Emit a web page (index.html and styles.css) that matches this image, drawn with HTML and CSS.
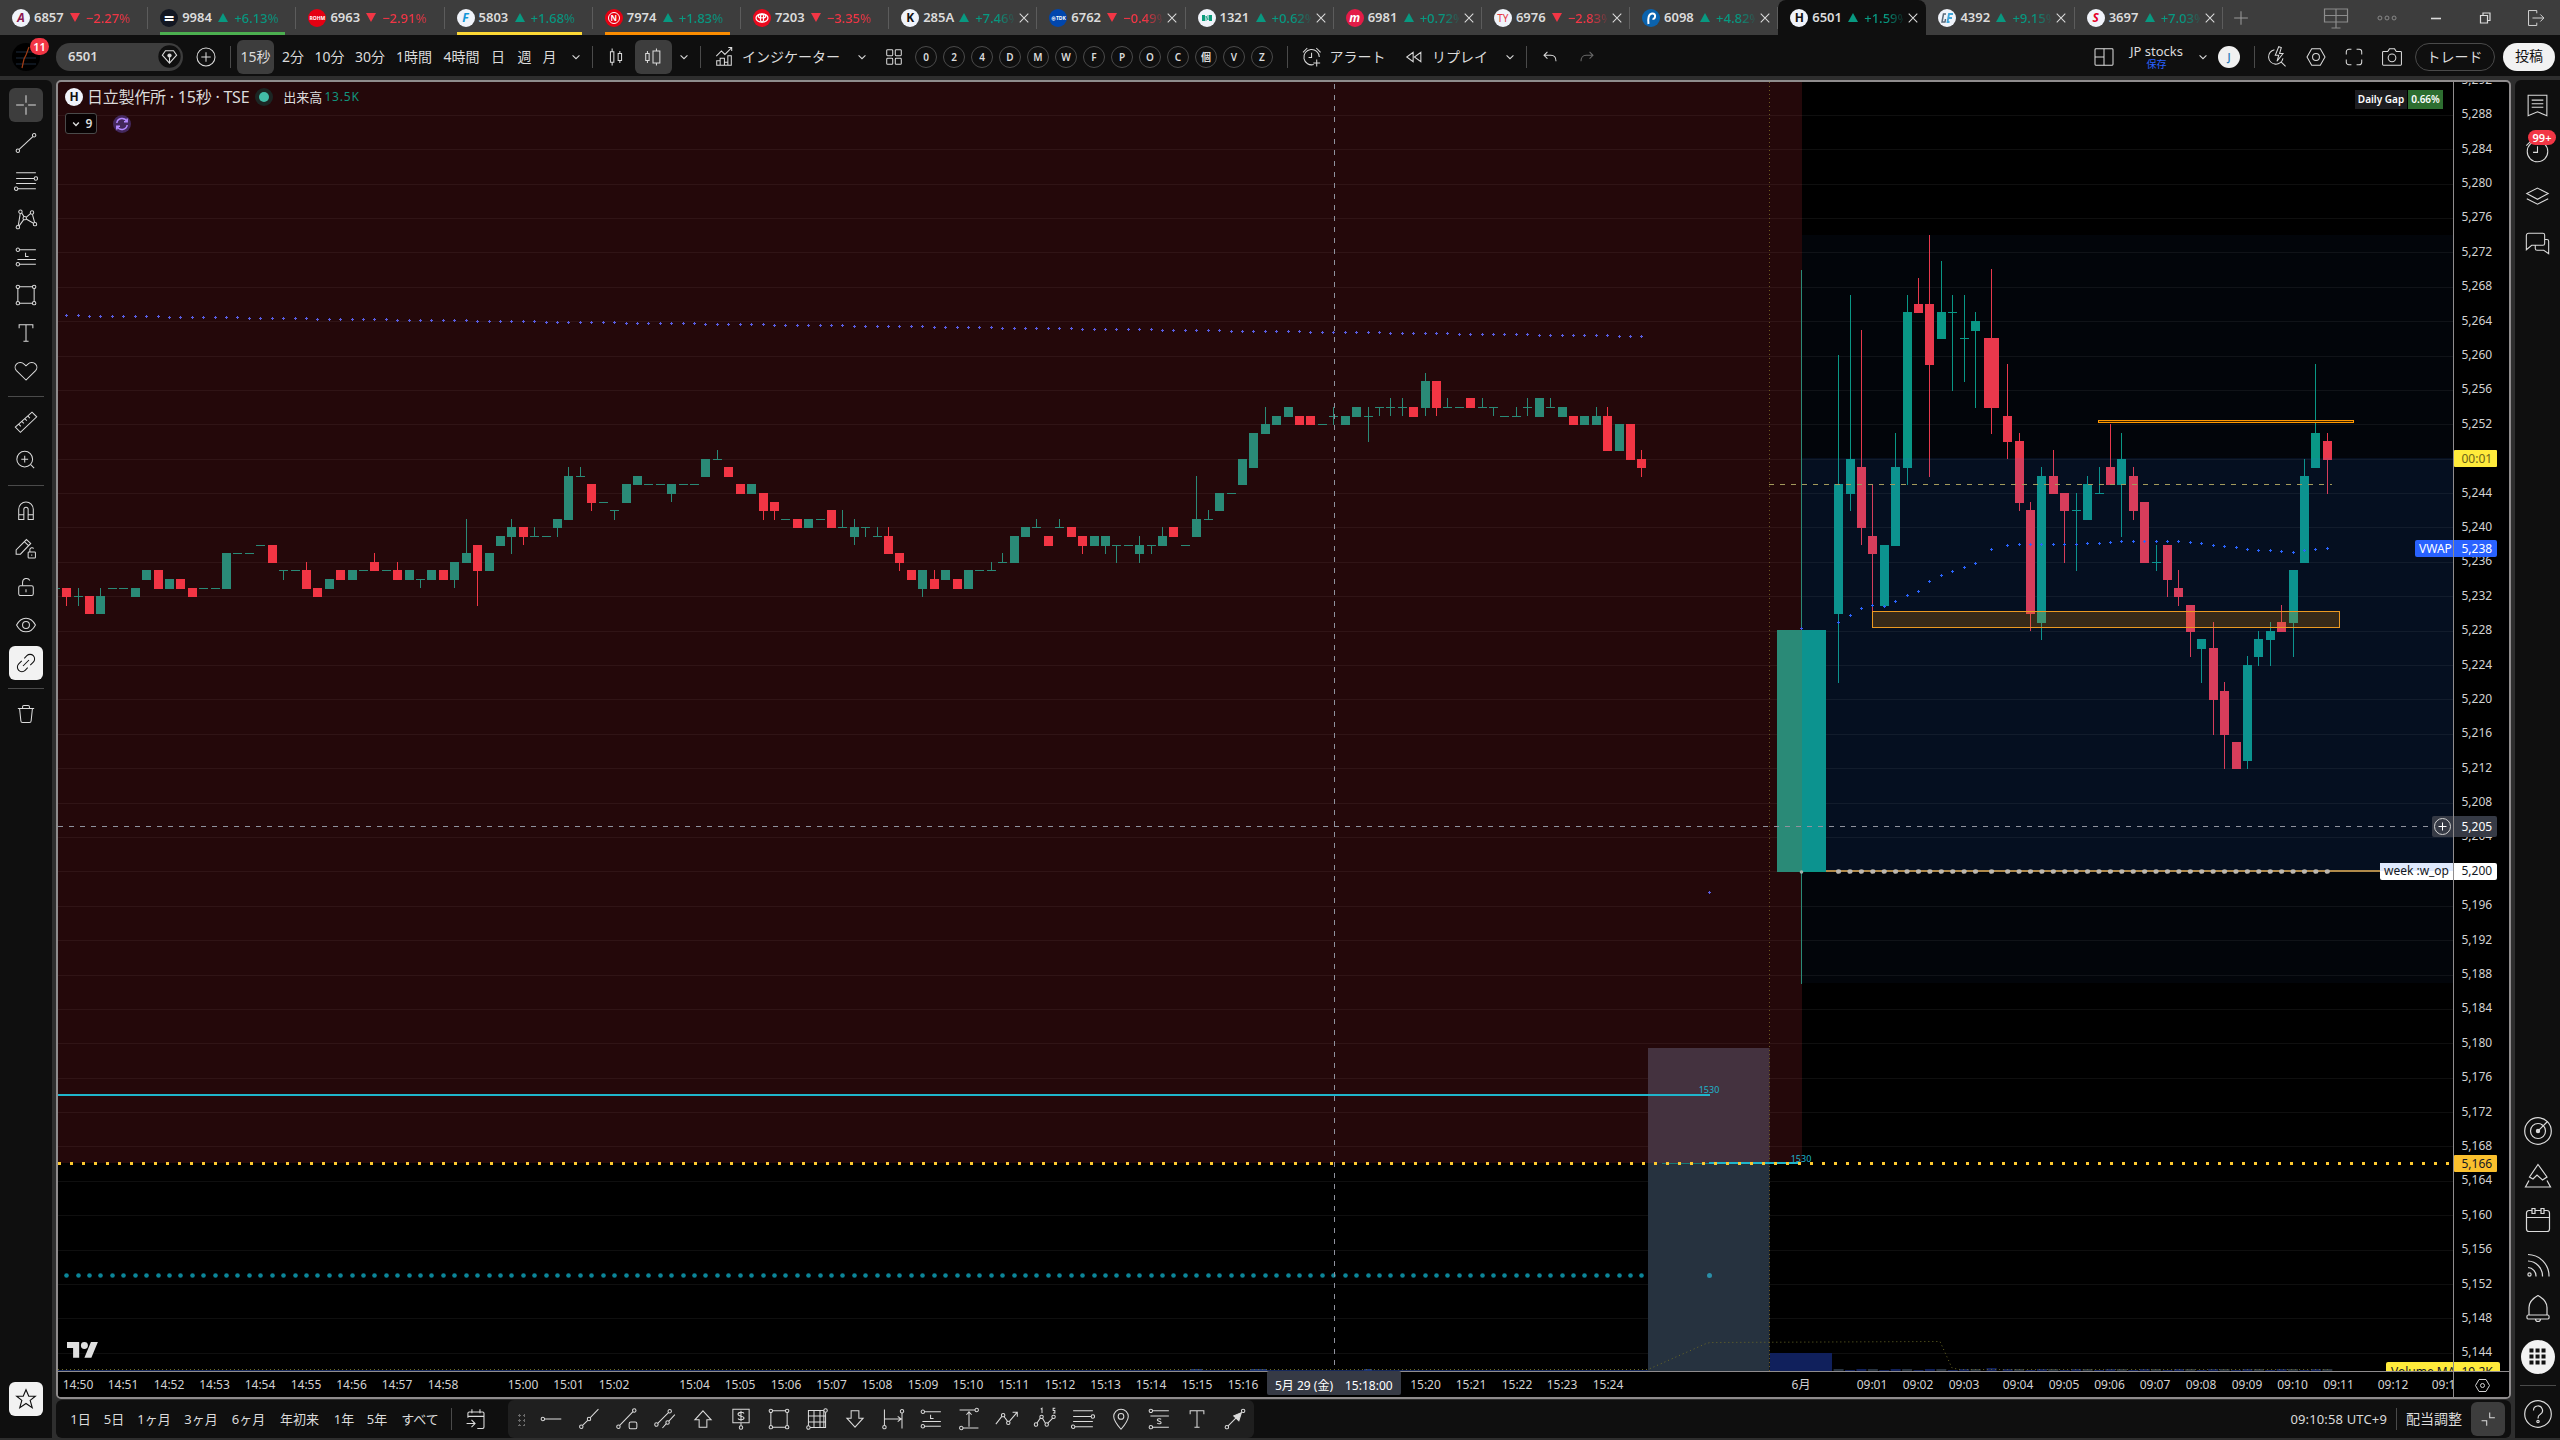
FILE: index.html
```html
<!DOCTYPE html>
<html lang="ja">
  <head>
    <meta charset="UTF-8" />
    <meta name="viewport" content="width=device-width, initial-scale=1.0" />
    <title>6501 日立製作所</title>
    <link rel="stylesheet" href="styles.css">
  </head>
  <body>
    <!-- Icon sprite -->
    <svg class="sprite">
      <symbol id="i-chev" viewBox="0 0 28 28"><path d="M10 12l4 4 4-4" /></symbol>
      <symbol id="i-close" viewBox="0 0 28 28"><path d="M9 9l10 10M19 9L9 19" /></symbol>
      <symbol id="i-plus" viewBox="0 0 28 28"><circle cx="14" cy="14" r="10.5" /><path d="M14 8.500v11M8.500 14h11" /></symbol>
      <symbol id="i-gem" viewBox="0 0 28 28"><circle cx="14" cy="14" r="12.500" fill="#0f0f0f" stroke="none" /><path d="M9.500 7.500h9L22 12.500l-8 9-8-9z" /><path d="M14 21v-6" /><circle cx="14" cy="13" r="1.800" fill="currentColor" /></symbol>
      <symbol id="i-candle" viewBox="0 0 28 28"><path d="M9.500 4v4M9.500 20v4M7.500 8h4v12h-4zM18.500 7v3M18.500 18v3M16.500 10h4v8h-4z" /></symbol>
      <symbol id="i-hollow" viewBox="0 0 28 28"><path d="M7.500 7v3M7.500 18v3M5.500 10h4v8h-4zM18 4v3M18 21v3M14 7h8v14h-8z" /></symbol>
      <symbol id="i-ind" viewBox="0 0 28 28"><path d="M5 13l6-6 4 4 8-8M19 3h4v4M5.500 23.500v-5h4v5zM9.500 23.500v-8h5v8M14.500 20h4v3.500M18.500 23.500v-11h4v11zM5 23.500h18" /></symbol>
      <symbol id="i-grid4" viewBox="0 0 28 28"><rect x="5.500" y="5.500" width="7" height="7" rx="1" /><rect x="15.500" y="5.500" width="7" height="7" rx="1" /><rect x="5.500" y="15.500" width="7" height="7" rx="1" /><rect x="15.500" y="15.500" width="7" height="7" rx="1" /></symbol>
      <symbol id="i-alarm" viewBox="0 0 28 28"><path d="M22.500 14a9 9 0 1 0-6.500 8.800M13.500 9v5.500H10M3.500 8.500l5-5M19 3.500l5 5M19.500 17v8M15.500 21h8" /></symbol>
      <symbol id="i-rewind" viewBox="0 0 28 28"><path d="M13 8.500v11L5.500 14zM22 8.500v11L14.500 14z" /></symbol>
      <symbol id="i-undo" viewBox="0 0 28 28"><path d="M11 8l-4 4 4 4M7 12h8c4 0 6 3 6 7" /></symbol>
      <symbol id="i-redo" viewBox="0 0 28 28"><path d="M17 8l4 4-4 4M21 12h-8c-4 0-6 3-6 7" /></symbol>
      <symbol id="i-layout" viewBox="0 0 28 28"><rect x="3.500" y="4.500" width="21" height="19" rx="1" /><path d="M14 4.500v19M3.500 14H14" /></symbol>
      <symbol id="i-fast" viewBox="0 0 28 28"><path d="M11 5.500a8.500 8.500 0 1 0 10 10M19 20l5 5M16 2l-4 10h4l-2 7 7-9h-4l2-7z" /></symbol>
      <symbol id="i-gear" viewBox="0 0 28 28"><path d="M9 4.500h10l5.500 9.500-5.500 9.500H9L3.500 14z" /><circle cx="14" cy="14" r="4" /></symbol>
      <symbol id="i-full" viewBox="0 0 28 28"><path d="M5 11V8a3 3 0 0 1 3-3h3M17 5h3a3 3 0 0 1 3 3v3M23 17v3a3 3 0 0 1-3 3h-3M11 23H8a3 3 0 0 1-3-3v-3" /></symbol>
      <symbol id="i-cam" viewBox="0 0 28 28"><path d="M4 7.500h5l2-3h6l2 3h5a1 1 0 0 1 1 1v14a1 1 0 0 1-1 1H4a1 1 0 0 1-1-1v-14a1 1 0 0 1 1-1z" /><circle cx="14" cy="15" r="4.500" /></symbol>
      <symbol id="i-cross" viewBox="0 0 28 28"><path d="M14 2.500v9M14 16.500v9M2.500 14h9M16.500 14h9" /></symbol>
      <symbol id="i-trend" viewBox="0 0 28 28"><circle cx="4.500" cy="23" r="2" /><circle cx="23.500" cy="5" r="2" /><path d="M6 21.500L22 6.500" /></symbol>
      <symbol id="i-fib" viewBox="0 0 28 28"><path d="M2.500 4.500h23M2.500 11h21M2.500 17h23M4.500 23h21" /><circle cx="25.500" cy="11" r="2" /><circle cx="2.500" cy="23" r="2" /></symbol>
      <symbol id="i-pattern" viewBox="0 0 28 28"><circle cx="4.500" cy="23.500" r="2" /><circle cx="7.500" cy="5.500" r="2" /><circle cx="12.500" cy="13" r="2" /><circle cx="21" cy="6.500" r="2" /><circle cx="24.500" cy="20" r="2" /><path d="M5 21.500l2.300-14M9 7l2.800 4.500M14.200 12l5.300-4.500M21.500 8.500l2.500 9.500M6 22l5.500-7.500M14.200 14l8.500 5" /></symbol>
      <symbol id="i-pos" viewBox="0 0 28 28"><circle cx="4.500" cy="5.500" r="2" /><circle cx="4.500" cy="22.500" r="2" /><path d="M6.500 5.500h19M4 17h21.500M6.500 22.500h19M13.500 9v4.500H17" /></symbol>
      <symbol id="i-rect" viewBox="0 0 28 28"><path d="M6.500 4.500h15M6.500 23.500h15M4.500 6.500v15M23.500 6.500v15" /><circle cx="4.500" cy="4.500" r="2" /><circle cx="23.500" cy="4.500" r="2" /><circle cx="4.500" cy="23.500" r="2" /><circle cx="23.500" cy="23.500" r="2" /></symbol>
      <symbol id="i-text" viewBox="0 0 28 28"><path d="M6 8.500v-4h16v4M14 4.500v19M11 23.500h6" /></symbol>
      <symbol id="i-heart" viewBox="0 0 28 28"><path d="M14 24.500L2.800 13.500a5.500 5.500 0 0 1 0-7.500 6.300 6.300 0 0 1 9 0L14 8l2.200-2a6.300 6.300 0 0 1 9 0 5.500 5.500 0 0 1 0 7.500z" /></symbol>
      <symbol id="i-ruler" viewBox="0 0 28 28"><path d="M1.500 20L21 2.500l5.500 5.500L7.500 26zM5.500 16.500L8 19M9 13.200l2.500 2.500M12.500 10l2.500 2.500M16 6.900l2.500 2.500" /></symbol>
      <symbol id="i-zoomin" viewBox="0 0 28 28"><circle cx="12.500" cy="13" r="9.200" /><path d="M12.500 9v8M8.500 13h8M19.500 19.500l4 4" /></symbol>
      <symbol id="i-magnet" viewBox="0 0 28 28"><path d="M5.500 24v-12a8.500 8.500 0 0 1 17 0v12h-6v-12a2.500 2.500 0 0 0-5 0v12zM5.500 18.500h6M16.500 18.500h6" /></symbol>
      <symbol id="i-penlock" viewBox="0 0 28 28"><path d="M2.500 20v-5L14.500 3l5 4.500L7.500 20zM12 5.500l5 4.500" /><rect x="16.500" y="17.500" width="8.500" height="7" rx="1" /><path d="M18.500 17.500v-3a2.500 2.500 0 0 1 4.500-1M20.700 20.500v1.500" /></symbol>
      <symbol id="i-lock" viewBox="0 0 28 28"><rect x="5.500" y="12.500" width="17" height="11.500" rx="2" /><path d="M10 12.500V8.500a4.500 4.500 0 0 1 8.500-2M14 16.500v3.500" /></symbol>
      <symbol id="i-eye" viewBox="0 0 28 28"><path d="M3 14c2.500-5 6.500-8 11-8s8.500 3 11 8c-2.500 5-6.500 8-11 8s-8.500-3-11-8z" /><circle cx="14" cy="14" r="4" /></symbol>
      <symbol id="i-link" viewBox="0 0 28 28"><path d="M12 8.500l3-3a5.300 5.300 0 0 1 7.500 7.500l-3.500 3.500M16 19.500l-3 3A5.300 5.300 0 0 1 5.500 15L9 11.500M10.500 17.500l7-7" /></symbol>
      <symbol id="i-trash" viewBox="0 0 28 28"><path d="M4.500 7.500h19M10 7.500v-2a1.500 1.500 0 0 1 1.500-1.500h5a1.500 1.500 0 0 1 1.500 1.500v2M6.500 7.500l1.500 14.500a2 2 0 0 0 2 2h8a2 2 0 0 0 2-2l1.500-14.500" /></symbol>
      <symbol id="i-star" viewBox="0 0 28 28"><path d="M14 4l3 7h7l-5.500 4.500 2.200 7.800L14 18.800l-6.700 4.500 2.200-7.800L4 11h7z" /></symbol>
      <symbol id="i-list" viewBox="0 0 28 28"><path d="M3.500 2.500h21v23L14 21l-10.500 4.500zM7.500 8h13M7.500 12h13M7.500 16h13" /></symbol>
      <symbol id="i-clock" viewBox="0 0 28 28"><circle cx="14" cy="14" r="11.500" /><path d="M14 8v7H9M1.500 7.500l5-5" /></symbol>
      <symbol id="i-layers" viewBox="0 0 28 28"><path d="M14 3.500l12 6-12 6.500-12-6.500zM2 15.500L14 21.500l12-6" /></symbol>
      <symbol id="i-chat" viewBox="0 0 28 28"><path d="M4 2.500h16a2 2 0 0 1 2 2v9.500a2 2 0 0 1-2 2H7.500l-6 5V5A2.500 2.500 0 0 1 4 2.500zM22 9.500h2.500a2 2 0 0 1 2 2v14L21 21.500h-7.500a2 2 0 0 1-2-2v-3" /></symbol>
      <symbol id="i-radar" viewBox="0 0 28 28"><circle cx="14" cy="14" r="13.300" /><circle cx="14" cy="14" r="7.500" /><circle cx="14" cy="14" r="1.600" fill="currentColor" /><path d="M14 14l9.500-9.500" /></symbol>
      <symbol id="i-hotlist" viewBox="0 0 28 28"><path d="M14 2.500l9 12.500-4.500 3-5.500-5-4 4-3.500-2zM5 18.500L1.500 25h25L23 18.500" /></symbol>
      <symbol id="i-cal" viewBox="0 0 28 28"><path d="M8 4.500H5A2.500 2.500 0 0 0 2.500 7v16A2.500 2.500 0 0 0 5 25.500h18a2.500 2.500 0 0 0 2.500-2.500V7A2.500 2.500 0 0 0 23 4.500h-3M11 4.500h6M2.500 11.500h23M8 2.500v5h3v-5zM17 2.500v5h3v-5z" /></symbol>
      <symbol id="i-feed" viewBox="0 0 28 28"><circle cx="5.500" cy="23.500" r="1.600" /><path d="M4 16.500a8.500 8.500 0 0 1 8 9M4 10a15 15 0 0 1 14.500 15.500M4 3.500A21.500 21.500 0 0 1 25 25.500" /></symbol>
      <symbol id="i-bell" viewBox="0 0 28 28"><path d="M5 20v-7.500c0-5 3.500-9 9-12 5.500 3 9 7 9 12V20M4 20h20c1.500 0 1.500 4 0 4H4c-1.500 0-1.500-4 0-4zM11.500 24a2.500 2.500 0 0 0 5 0" /></symbol>
      <symbol id="i-apps" viewBox="0 0 28 28"><path d="M5 5h4.500v4.500H5zM11.800 5h4.500v4.500h-4.500zM18.500 5H23v4.500h-4.500zM5 11.800h4.500v4.500H5zM11.800 11.800h4.500v4.500h-4.500zM18.500 11.800H23v4.500h-4.500zM5 18.500h4.500V23H5zM11.800 18.500h4.500V23h-4.500zM18.500 18.500H23V23h-4.500z" fill="#111" stroke="none" /></symbol>
      <symbol id="i-help" viewBox="0 0 28 28"><circle cx="14" cy="14" r="13.300" /><path d="M9.500 10.500a4.500 4.500 0 1 1 6.500 4c-1.500.7-2 1.500-2 4" /><circle cx="14" cy="21.500" r="1.200" /></symbol>
      <symbol id="i-goto" viewBox="0 0 28 28"><path d="M5.500 12V7A1.500 1.500 0 0 1 7 5.500h15A1.500 1.500 0 0 1 23.500 7v15.500a1.500 1.500 0 0 1-1.500 1.500h-6M5.500 10.500h18M10 2.500v4.500M19 2.500v4.500M4 18.500h9M9.500 14.500l4 4-4 4" /></symbol>
      <symbol id="i-hray" viewBox="0 0 28 28"><circle cx="4.500" cy="14" r="2" /><path d="M6.500 14H26" /></symbol>
      <symbol id="i-info" viewBox="0 0 28 28"><circle cx="5" cy="23" r="2" /><circle cx="14" cy="14" r="2" /><path d="M6.500 21.500l6-6M15.500 12.500l9.500-10" /></symbol>
      <symbol id="i-tsq" viewBox="0 0 28 28"><circle cx="4" cy="23" r="2" /><circle cx="22.500" cy="4" r="2" /><path d="M5.500 21.500L21 5.500" /><rect x="16.500" y="17.500" width="9" height="8" rx="2" /></symbol>
      <symbol id="i-chan" viewBox="0 0 28 28"><circle cx="4" cy="20.500" r="2" /><circle cx="19.500" cy="5" r="2" /><circle cx="17" cy="18" r="2" /><path d="M5.500 19L18 6.500M11 24.500l4.500-5M18.500 16.500l7-7.500" /></symbol>
      <symbol id="i-up" viewBox="0 0 28 28"><path d="M14 4.500l9.500 10.500h-5v8.500h-9V15h-5z" /></symbol>
      <symbol id="i-down" viewBox="0 0 28 28"><path d="M14 23.500L4.500 13h5V4.500h9V13h5z" /></symbol>
      <symbol id="i-price" viewBox="0 0 28 28"><path d="M4.500 2.500h19v16h-19zM14 18.500V22M17.500 7.500c-1-1.800-7-1.800-7 1 0 2.900 7 1.600 7 4.400 0 2.600-6 2.600-7 .6M14 4.500v12" /><circle cx="14" cy="24" r="2" /></symbol>
      <symbol id="i-gridsq" viewBox="0 0 28 28"><path d="M4 4h18v20H4zM4 10.500h20M4 17.500h20M10.500 4v20M17.500 4v20M24 6v18H6" /><circle cx="24" cy="4" r="2" fill="#1f1f1f" /><circle cx="4" cy="24" r="2" fill="#1f1f1f" /></symbol>
      <symbol id="i-hr" viewBox="0 0 28 28"><path d="M4 3v18M24.500 7v18M4 14h20M19.500 11l4 3-4 3" /><circle cx="4" cy="23.500" r="2" /><circle cx="24.500" cy="5" r="2" /></symbol>
      <symbol id="i-vr" viewBox="0 0 28 28"><path d="M3 3.500h18M7 24.500h18M14 5v18M11 9l3-3.500L17 9" /><circle cx="23" cy="3.500" r="2" /><circle cx="5" cy="24.500" r="2" /></symbol>
      <symbol id="i-path" viewBox="0 0 28 28"><path d="M1 20l7-9M10.500 11l4 5.500M17 16.500L26 6M20.500 6h5.500v5.500" /><circle cx="9.500" cy="9.500" r="2" /><circle cx="15.500" cy="18.500" r="2" /></symbol>
      <symbol id="i-ell" viewBox="0 0 28 28"><path d="M4.500 19l4-6M11 13l3.500 6M17 19l6-6" /><circle cx="3.500" cy="20.500" r="2" /><circle cx="10" cy="11.500" r="2" /><circle cx="16" cy="20.500" r="2" /><circle cx="24" cy="11.500" r="2" /><path d="M9 2.500l1.500-1V7M26 1.500h-2.500v2.500h2V7h-2" /></symbol>
      <symbol id="i-pin" viewBox="0 0 28 28"><path d="M14 26C8.500 19.500 5.500 15 5.500 11a8.500 8.500 0 0 1 17 0c0 4-3 8.500-8.500 15z" /><circle cx="14" cy="11" r="3.300" /></symbol>
      <symbol id="i-short" viewBox="0 0 28 28"><circle cx="4.500" cy="4.500" r="2" /><circle cx="4.500" cy="23.500" r="2" /><path d="M6.500 4.500h19M4 10.500h21.500M6.500 23.500h19M16.500 14.500c-1-1.200-4.500-.9-4.500.8 0 1.700 4.500 1.200 4.500 3 0 1.600-3.500 1.800-4.500.4" /></symbol>
      <symbol id="i-arrow" viewBox="0 0 28 28"><circle cx="4.500" cy="23.500" r="2" /><circle cx="23.500" cy="4.500" r="2" /><path d="M6 22l9-9" /><path d="M21.500 6.500L18.500 16l-6-5.500z" fill="currentColor" /></symbol>
      <symbol id="i-tiles" viewBox="0 0 28 28"><path d="M2.500 5h23v13h-23zM14 5v19M2.500 11.500h23M9.500 24h9" /></symbol>
      <symbol id="i-dots" viewBox="0 0 28 28"><circle cx="5" cy="14" r="2.500" /><circle cx="14" cy="14" r="2.500" /><circle cx="23" cy="14" r="2.500" /></symbol>
      <symbol id="i-min" viewBox="0 0 28 28"><path d="M9 14.500h10" stroke-width="1.600" /></symbol>
      <symbol id="i-rest" viewBox="0 0 28 28"><path d="M9.500 11.500h7v7.500h-7zM12 11.500V9h7v7.500h-2.500" /></symbol>
      <symbol id="i-exit" viewBox="0 0 28 28"><path d="M15 8V4.500H4.500v19H15V20M9.500 14H24M19.500 9.500L24 14l-4.500 4.500" /></symbol>
      <symbol id="i-collapse" viewBox="0 0 28 28"><path d="M16 6.500v6h6M6.500 16h6v6" /></symbol>
    </svg>

    <!-- Symbol tabs -->
    <div id="tab-bar">
      <div class="tab"><span class="logo plum">A</span><b>6857</b><i class="down"></i><span class="pct neg">−2.27%</span></div>
      <div class="tab line-green"><span class="logo ink">=</span><b>9984</b><i class="up"></i><span class="pct pos">+6.13%</span></div>
      <div class="tab"><span class="logo red tiny">ROHM</span><b>6963</b><i class="down"></i><span class="pct neg">−2.91%</span></div>
      <div class="tab line-yellow"><span class="logo sky">F</span><b>5803</b><i class="up"></i><span class="pct pos">+1.68%</span></div>
      <div class="tab line-orange"><span class="logo red ring"><em>N</em></span><b>7974</b><i class="up"></i><span class="pct pos">+1.83%</span></div>
      <div class="tab"><svg class="mark" viewBox="0 0 18 18"><circle cx="9" cy="9" r="9" fill="#eb0a1e" stroke="none" /><g stroke="#fff"><ellipse cx="9" cy="9" rx="6" ry="4.200" /><ellipse cx="9" cy="7.200" rx="3.800" ry="1.700" /><ellipse cx="9" cy="9" rx="1.600" ry="4" /></g></svg><b>7203</b><i class="down"></i><span class="pct neg">−3.35%</span></div>
      <div class="tab closable"><span class="logo">K</span><b>285A</b><i class="up"></i><span class="pct pos">+7.46%</span><svg><use href="#i-close" /></svg></div>
      <div class="tab closable"><span class="logo blue tiny">⊕TDK</span><b>6762</b><i class="down"></i><span class="pct neg">−0.49%</span><svg><use href="#i-close" /></svg></div>
      <div class="tab closable"><svg class="mark" viewBox="0 0 18 18"><circle cx="9" cy="9" r="9" fill="#f0f3fa" stroke="none" /><path d="M4 6h3v6H4zM11 6h3v6h-3z" fill="#0a9a7a" stroke="none" /><path d="M8 12V7l2 4V6" stroke="#0a9a7a" stroke-width="0.800" /></svg><b>1321</b><i class="up"></i><span class="pct pos">+0.62%</span><svg><use href="#i-close" /></svg></div>
      <div class="tab closable"><span class="logo rose">m</span><b>6981</b><i class="up"></i><span class="pct pos">+0.72%</span><svg><use href="#i-close" /></svg></div>
      <div class="tab closable"><span class="logo ty">TY</span><b>6976</b><i class="down"></i><span class="pct neg">−2.83%</span><svg><use href="#i-close" /></svg></div>
      <div class="tab closable"><svg class="mark" viewBox="0 0 18 18"><circle cx="9" cy="9" r="9" fill="#0b63ae" stroke="none" /><path d="M6.500 15c-.8-5 0-10 3.500-10.500 2.500-.2 3.500 1.500 3 3.500-.3 1.500-1.500 2-2.500 1.700" stroke="#fff" stroke-width="2" /></svg><b>6098</b><i class="up"></i><span class="pct pos">+4.82%</span><svg><use href="#i-close" /></svg></div>
      <div class="tab closable active"><span class="logo">H</span><b>6501</b><i class="up"></i><span class="pct pos">+1.59%</span><svg><use href="#i-close" /></svg></div>
      <div class="tab closable"><svg class="mark" viewBox="0 0 18 18"><circle cx="9" cy="9" r="9" fill="#f0f3fa" stroke="none" /><path d="M8 5H5.500L4 13h3l.5-3" stroke="#5a6a7a" stroke-width="1.500" /><path d="M15 5h-4l-1.500 8h2M10.500 9H14" stroke="#3fa5d8" stroke-width="1.800" /></svg><b>4392</b><i class="up"></i><span class="pct pos">+9.15%</span><svg><use href="#i-close" /></svg></div>
      <div class="tab closable"><span class="logo scarlet">S</span><b>3697</b><i class="up"></i><span class="pct pos">+7.03%</span><svg><use href="#i-close" /></svg></div>
      <svg class="new-tab" viewBox="0 0 28 28"><path d="M14 6v16M6 14h16" /></svg>
      <div class="window-tools">
        <svg class="dim"><use href="#i-tiles" /></svg>
        <svg class="dim small"><use href="#i-dots" /></svg>
        <svg><use href="#i-min" /></svg>
        <svg><use href="#i-rest" /></svg>
        <svg class="small"><use href="#i-exit" /></svg>
      </div>
    </div>

    <!-- Top toolbar -->
    <div id="toolbar">
      <div class="tools-left">
        <div class="avatar"><svg viewBox="0 0 28 28"><path d="M4 9h20M4 15h20M4 21h20" stroke="#1c2a3c" /><path d="M10 25l2-9 2-4 3-8" stroke="#a33d16" /></svg><span class="badge">11</span></div>
        <div class="symbol-search">6501<svg><use href="#i-gem" /></svg></div>
        <svg><use href="#i-plus" /></svg>
        <span class="sep"></span>
        <span class="btn selected">15秒</span>
        <span>2分</span><span>10分</span><span>30分</span><span>1時間</span><span>4時間</span><span>日</span><span>週</span><span>月</span>
        <svg class="chev"><use href="#i-chev" /></svg>
        <span class="sep"></span>
        <svg><use href="#i-candle" /></svg>
        <span class="btn selected"><svg><use href="#i-hollow" /></svg></span>
        <svg class="chev"><use href="#i-chev" /></svg>
        <span class="sep"></span>
        <span class="labelled"><svg><use href="#i-ind" /></svg>インジケーター</span>
        <svg class="chev"><use href="#i-chev" /></svg>
        <svg><use href="#i-grid4" /></svg>
        <div class="hotkeys"><span>0</span><span>2</span><span>4</span><span>D</span><span>M</span><span>W</span><span>F</span><span>P</span><span>O</span><span>C</span><span>個</span><span>V</span><span>Z</span></div>
        <span class="sep"></span>
        <span class="labelled"><svg><use href="#i-alarm" /></svg>アラート</span>
        <span class="labelled"><svg><use href="#i-rewind" /></svg>リプレイ</span>
        <svg class="chev"><use href="#i-chev" /></svg>
        <span class="sep"></span>
        <svg><use href="#i-undo" /></svg>
        <svg class="faint"><use href="#i-redo" /></svg>
      </div>
      <div class="tools-right">
        <svg><use href="#i-layout" /></svg>
        <div class="layout-name">JP stocks<small>保存</small></div>
        <svg class="chev"><use href="#i-chev" /></svg>
        <span class="user">J</span>
        <span class="sep"></span>
        <svg><use href="#i-fast" /></svg>
        <svg><use href="#i-gear" /></svg>
        <svg><use href="#i-full" /></svg>
        <svg><use href="#i-cam" /></svg>
        <span class="trade">トレード</span>
        <span class="publish">投稿</span>
      </div>
    </div>

    <div id="workspace">
      <!-- Left: drawing tools -->
      <div id="draw-tools">
        <span class="tool selected"><svg><use href="#i-cross" /></svg></span>
        <span class="tool"><svg><use href="#i-trend" /></svg></span>
        <span class="tool"><svg><use href="#i-fib" /></svg></span>
        <span class="tool"><svg><use href="#i-pattern" /></svg></span>
        <span class="tool"><svg><use href="#i-pos" /></svg></span>
        <span class="tool"><svg><use href="#i-rect" /></svg></span>
        <span class="tool"><svg><use href="#i-text" /></svg></span>
        <span class="tool"><svg><use href="#i-heart" /></svg></span>
        <hr />
        <span class="tool"><svg><use href="#i-ruler" /></svg></span>
        <span class="tool"><svg><use href="#i-zoomin" /></svg></span>
        <hr />
        <span class="tool"><svg><use href="#i-magnet" /></svg></span>
        <span class="tool"><svg><use href="#i-penlock" /></svg></span>
        <span class="tool"><svg><use href="#i-lock" /></svg></span>
        <span class="tool"><svg><use href="#i-eye" /></svg></span>
        <span class="tool light"><svg><use href="#i-link" /></svg></span>
        <hr />
        <span class="tool"><svg><use href="#i-trash" /></svg></span>
        <span class="tool light favourites"><svg><use href="#i-star" /></svg></span>
      </div>

      <!-- Center: chart -->
      <div id="center">
        <div id="chart-box">
          <svg id="chart" viewBox="58 82 2451 1315"></svg>
          <div class="legend">
            <div class="legend-title"><span class="logo">H</span><span class="name">日立製作所 · 15秒 · TSE</span><span class="status"></span><span class="vol">出来高</span><span class="vol-value">13.5K</span></div>
            <div class="legend-row"><span class="count"><svg><use href="#i-chev" /></svg>9</span><svg class="sync" viewBox="0 0 20 20"><circle cx="10" cy="10" r="9" fill="#43285c" stroke="none" /><path d="M4.800 9a5.300 5.300 0 0 1 10-1.500M15.200 11a5.300 5.300 0 0 1-10 1.500M15.200 4.500v3.200H12M4.800 15.500v-3.200H8" stroke="#b388ff" stroke-width="1.500" /></svg></div>
          </div>
          <div class="gap-table"><span>Daily Gap</span><span class="value">0.66%</span></div>
        </div>

        <div id="bottom-bar">
          <div class="ranges"><span>1日</span><span>5日</span><span>1ヶ月</span><span>3ヶ月</span><span>6ヶ月</span><span>年初来</span><span>1年</span><span>5年</span><span>すべて</span><span class="sep"></span><svg><use href="#i-goto" /></svg></div>
          <div class="fav-tools">
            <span class="grip"></span>
            <svg><use href="#i-hray" /></svg><svg><use href="#i-info" /></svg><svg><use href="#i-tsq" /></svg><svg><use href="#i-chan" /></svg><svg><use href="#i-up" /></svg><svg><use href="#i-price" /></svg><svg><use href="#i-rect" /></svg><svg><use href="#i-gridsq" /></svg><svg><use href="#i-down" /></svg><svg><use href="#i-hr" /></svg><svg><use href="#i-pos" /></svg><svg><use href="#i-vr" /></svg><svg><use href="#i-path" /></svg><svg><use href="#i-ell" /></svg><svg><use href="#i-fib" /></svg><svg><use href="#i-pin" /></svg><svg><use href="#i-short" /></svg><svg><use href="#i-text" /></svg><svg><use href="#i-arrow" /></svg>
          </div>
          <div class="clock"><span>09:10:58 UTC+9</span><span class="sep"></span><span>配当調整</span><span class="btn selected"><svg><use href="#i-collapse" /></svg></span></div>
        </div>
      </div>

      <!-- Right: widgets -->
      <div id="widgets">
        <span class="widget"><svg><use href="#i-list" /></svg></span>
        <span class="widget"><svg><use href="#i-clock" /></svg><span class="badge">99+</span></span>
        <span class="widget"><svg><use href="#i-layers" /></svg></span>
        <span class="widget"><svg><use href="#i-chat" /></svg></span>
        <span class="spacer"></span>
        <span class="widget low"><svg><use href="#i-radar" /></svg></span>
        <span class="widget low"><svg><use href="#i-hotlist" /></svg></span>
        <span class="widget low"><svg><use href="#i-cal" /></svg></span>
        <span class="widget low"><svg><use href="#i-feed" /></svg></span>
        <span class="widget low"><svg><use href="#i-bell" /></svg></span>
        <span class="widget apps"><svg><use href="#i-apps" /></svg></span>
        <hr />
        <span class="widget low help"><svg><use href="#i-help" /></svg></span>
      </div>
    </div>

    <script src="chart.js"></script>
  </body>
</html>
```
FILE: styles.css
```css
* {
  box-sizing: border-box;
}

body {
  margin: 0;
  width: 2560px;
  height: 1440px;
  overflow: hidden;
  display: flex;
  flex-direction: column;
  background-color: #2e2e2e;
  color: #dbdbdb;
  font-family: "Noto Sans", "Noto Sans CJK JP", sans-serif;
  font-size: 14px;
  line-height: 1;
}

svg {
  display: block;
  flex: none;
  width: 28px;
  height: 28px;
  fill: none;
  stroke: currentColor;
  stroke-width: 1.2;
}

svg.sprite {
  position: absolute;
  width: 0;
  height: 0;
}

.sep {
  width: 1px;
  height: 22px;
  background-color: #4a4a4a;
}

.selected {
  background-color: #3d3d3d;
  border-radius: 6px;
}

.badge {
  position: absolute;
  background-color: #f23645;
  color: #fff;
  font-weight: 600;
  border-radius: 10px;
  text-align: center;
}

/* Symbol tabs */
#tab-bar {
  flex: none;
  height: 35px;
  display: flex;
  align-items: center;
  background-color: #3d3d3d;
}

.tab {
  position: relative;
  flex: none;
  width: 148.2px;
  height: 35px;
  padding-left: 12px;
  display: flex;
  align-items: center;
  font-size: 13px;
}

.tab::after {
  content: "";
  position: absolute;
  right: 0;
  top: 7px;
  width: 1px;
  height: 22px;
  background-color: #5c5c5c;
}

.tab.active {
  background-color: #0f0f0f;
  border-radius: 8px 8px 0 0;
}

.tab.active::after {
  display: none;
}

.tab b {
  width: 35px;
  margin-left: 4px;
  font-weight: 600;
}

.tab i {
  width: 0;
  height: 0;
  margin: 0 6px 0 1px;
  border-left: 5px solid transparent;
  border-right: 5px solid transparent;
}

.tab .up {
  border-bottom: 9px solid #089981;
}

.tab .down {
  border-top: 9px solid #f23645;
}

.pct {
  width: 47px;
  overflow: hidden;
  white-space: nowrap;
  font-weight: 500;
  line-height: 18px;
  -webkit-mask-image: linear-gradient(90deg, #000 60%, rgba(0, 0, 0, 0.6));
  mask-image: linear-gradient(90deg, #000 60%, rgba(0, 0, 0, 0.6));
}

.closable .pct {
  width: 39px;
  -webkit-mask-image: linear-gradient(90deg, #000 55%, rgba(0, 0, 0, 0.15));
  mask-image: linear-gradient(90deg, #000 55%, rgba(0, 0, 0, 0.15));
}

.tab svg {
  width: 24px;
  height: 24px;
  margin-left: -2px;
}

.tab svg.mark {
  width: 18px;
  height: 18px;
  margin-left: 0;
}

.pos {
  color: #089981;
}

.neg {
  color: #f23645;
}

.line-green::before,
.line-yellow::before,
.line-orange::before {
  content: "";
  position: absolute;
  left: 12px;
  bottom: 0;
  width: 125px;
  height: 3px;
  background-color: #4caf50;
}

.line-yellow::before {
  background-color: #fdd835;
}

.line-orange::before {
  background-color: #fb8c00;
}

.logo {
  flex: none;
  width: 18px;
  height: 18px;
  border-radius: 50%;
  background-color: #f0f3fa;
  color: #111;
  font-size: 12px;
  font-weight: 700;
  line-height: 18px;
  text-align: center;
  white-space: nowrap;
}

.logo.plum { color: #8c1950; font-style: italic; }
.logo.ink { background-color: #131722; color: #fff; font-size: 18px; }
.logo.red { background-color: #e60012; color: #fff; }
.logo.sky { color: #1296d8; font-style: italic; }
.logo.blue { background-color: #0046ad; color: #fff; }
.logo.rose { background-color: #e31c47; color: #fff; font-style: italic; }
.logo.ty { color: #e53945; font-weight: 400; font-size: 10px; }
.logo.scarlet { color: #e60028; font-style: italic; }
.logo.tiny { font-size: 5px; }

.ring em {
  display: block;
  width: 12px;
  height: 12px;
  margin: 3px;
  border: 1px solid #fff;
  border-radius: 50%;
  font-size: 8px;
  font-style: normal;
  line-height: 10px;
}

.new-tab {
  margin-left: 6px;
  width: 24px;
  height: 24px;
  color: #9a9a9a;
}

.window-tools {
  margin-left: auto;
  display: grid;
  grid-template-columns: 48px 54px 44px 54px 48px;
  justify-items: center;
  align-items: center;
}

.window-tools .small {
  width: 22px;
  height: 22px;
}

.dim {
  color: #8c8c8c;
}

/* Top toolbar */
#toolbar {
  flex: none;
  height: 41px;
  margin-bottom: 4px;
  padding-top: 2px;
  display: flex;
  justify-content: space-between;
  background-color: #0f0f0f;
}

.tools-left,
.tools-right {
  display: grid;
  align-items: center;
  justify-items: center;
  height: 39px;
  white-space: nowrap;
}

.tools-left {
  grid-template-columns:
    56px 127px 46px 3px 47px 28px 45px 36px 52px 43px 30px 23px 27px 25px
    8px 39px 36px 26px 7px 144px 28px 35px 366px 20px 91px 114px 16px 17px 29px 46px;
}

.tools-right {
  grid-template-columns: 20px 85px 8px 44px 7px 38px 40px 36px 39px 87px 62px;
}

.tools-left > svg,
.tools-right > svg,
.btn svg,
.labelled svg {
  width: 24px;
  height: 24px;
}

.tools-left > svg.faint {
  color: #6a6a6a;
}

.btn {
  width: 37px;
  height: 34px;
  display: flex;
  align-items: center;
  justify-content: center;
}

.avatar {
  position: relative;
  width: 28px;
  height: 28px;
  margin-right: 4px;
  border-radius: 50%;
  background-color: #000;
}

.avatar .badge {
  left: 18px;
  top: -5px;
  width: 19px;
  height: 17px;
  font-size: 11px;
  line-height: 17px;
}

.symbol-search {
  width: 127px;
  height: 28px;
  padding: 0 1px 0 12px;
  display: flex;
  align-items: center;
  justify-content: space-between;
  border-radius: 14px;
  background-color: #3d3d3d;
  font-weight: 600;
  font-size: 13px;
}

.symbol-search svg {
  width: 25px;
  height: 25px;
}

.labelled {
  display: flex;
  align-items: center;
  gap: 6px;
}

.hotkeys {
  display: flex;
  gap: 6px;
}

.hotkeys span {
  width: 22px;
  height: 22px;
  border: 1px solid #4a4a4a;
  border-radius: 50%;
  font-size: 10px;
  font-weight: 600;
  line-height: 20px;
  text-align: center;
}

.layout-name {
  font-size: 13px;
  text-align: center;
}

.layout-name small {
  display: block;
  margin-top: 1px;
  color: #2962ff;
  font-size: 10px;
}

.user {
  width: 22px;
  height: 22px;
  border-radius: 50%;
  background-color: #f0f0f0;
  color: #2b7bb9;
  font-size: 10px;
  font-weight: 600;
  line-height: 22px;
  text-align: center;
}

.trade,
.publish {
  height: 28px;
  border-radius: 14px;
  line-height: 26px;
  text-align: center;
}

.trade {
  width: 80px;
  border: 1px solid #4a4a4a;
}

.publish {
  width: 52px;
  background-color: #f2f2f2;
  color: #0f0f0f;
}

/* Workspace */
#workspace {
  height: 1358px;
  display: flex;
  gap: 4px;
}

#draw-tools {
  width: 52px;
  padding-top: 6px;
  display: flex;
  flex-direction: column;
  align-items: center;
  background-color: #0f0f0f;
  border-radius: 0 6px 0 0;
}

#draw-tools hr,
#widgets hr {
  width: 36px;
  height: 1px;
  margin: 6px 0;
  border: none;
  background-color: #4a4a4a;
}

.tool {
  width: 34px;
  height: 34px;
  margin: 2px 0;
  display: flex;
  align-items: center;
  justify-content: center;
}

.tool svg {
  width: 24px;
  height: 24px;
}

.tool.light {
  background-color: #f2f2f2;
  border-radius: 6px;
  color: #0f0f0f;
}

.favourites {
  margin-top: auto;
  margin-bottom: 22px;
}

#center {
  width: 2455px;
  display: flex;
  flex-direction: column;
}

#chart-box {
  position: relative;
  flex: none;
  height: 1319px;
  border: 2px solid #8f8c8d;
  border-radius: 5px;
  background-color: #000;
  overflow: hidden;
}

#chart {
  width: 2451px;
  height: 1315px;
  stroke: none;
  stroke-width: 1;
  font-size: 12px;
}

#chart text {
  fill: #d2d2d2;
}

#chart .level {
  fill: #1fb5cc;
  font-size: 9px;
}

#chart .dark {
  fill: #131722;
}

#chart .olive {
  fill: #6b6218;
}

#chart .white {
  fill: #fff;
}

/* Legend lies over the plot */
.legend {
  position: absolute;
  left: 7px;
  top: 5px;
}

.legend-title,
.legend-row {
  display: flex;
  align-items: center;
}

.legend-title {
  height: 20px;
}

.name {
  margin: 0 10px 0 4px;
  font-size: 16px;
  letter-spacing: -0.22px;
}

.status {
  width: 10px;
  height: 10px;
  margin-right: 14px;
  border-radius: 50%;
  background-color: #42bda8;
  box-shadow: 0 0 0 4px #1c2624;
}

.vol {
  font-size: 13px;
}

.vol-value {
  margin-left: 2px;
  color: #12947d;
  font-size: 12px;
  letter-spacing: 0.8px;
}

.legend-row {
  margin-top: 6px;
}

.count {
  width: 32px;
  height: 21px;
  display: flex;
  align-items: center;
  justify-content: center;
  border: 1px solid #4a4a4a;
  border-radius: 3px;
  background-color: #080203;
  font-size: 12px;
  font-weight: 600;
}

.count svg {
  width: 20px;
  height: 22px;
  margin-left: -4px;
  stroke-width: 2;
}

.sync {
  width: 20px;
  height: 20px;
  margin-left: 15px;
}

.gap-table {
  position: absolute;
  top: 8px;
  right: 66px;
  display: flex;
  gap: 1px;
  color: #fff;
  font-size: 10px;
  font-weight: 600;
  line-height: 19px;
  text-align: center;
}

.gap-table span {
  width: 52px;
  background-color: #1c1c1f;
}

.gap-table .value {
  width: 35px;
  background-color: #2d6e30;
}

/* Bottom bar */
#bottom-bar {
  height: 38px;
  margin-top: 1px;
  display: flex;
  align-items: center;
  background-color: #0f0f0f;
  border-radius: 6px;
  font-size: 14px;
  white-space: nowrap;
}

.ranges {
  width: 452px;
  display: grid;
  grid-template-columns: 41px 26px 54px 40px 55px 47px 42px 24px 62px 1px 46px;
  padding-left: 4px;
  align-items: center;
  justify-items: center;
  font-size: 13px;
}

.ranges svg {
  width: 25px;
  height: 25px;
}

.fav-tools {
  width: 746px;
  height: 38px;
  padding-left: 9px;
  display: flex;
  align-items: center;
  gap: 14px;
  background-color: #1f1f1f;
  border-radius: 6px;
}

.fav-tools svg {
  width: 24px;
  height: 24px;
}

.grip {
  width: 8px;
  height: 13px;
  background-image: radial-gradient(circle, #6a6a6a 1px, transparent 1.3px);
  background-size: 5px 5px;
}

.clock {
  margin-left: auto;
  margin-right: 6px;
  display: flex;
  align-items: center;
  gap: 9px;
}

.clock span:first-child {
  font-size: 13px;
  letter-spacing: 0.15px;
}

.clock .btn {
  width: 34px;
}

/* Right widgets */
#widgets {
  width: 45px;
  padding-top: 2px;
  display: flex;
  flex-direction: column;
  align-items: center;
  background-color: #0f0f0f;
  border-radius: 6px 0 0 0;
}

.widget {
  position: relative;
  width: 45px;
  height: 46px;
  display: flex;
  align-items: center;
  justify-content: center;
}

.widget svg {
  width: 25px;
  height: 25px;
}

.widget .badge {
  top: 2px;
  left: 13px;
  width: 28px;
  height: 15px;
  font-size: 11px;
  line-height: 15px;
}

.spacer {
  flex: 1;
}

.widget.low {
  height: 44.5px;
}

.widget.low svg {
  width: 28px;
  height: 28px;
}

.widget.apps {
  width: 34px;
  height: 34px;
  margin: 8px 0 5px;
  border-radius: 50%;
  background-color: #f2f2f2;
}

.widget.help {
  margin-bottom: 2px;
}

#draw-tools .favourites svg {
  width: 26px;
  height: 26px;
}
```
FILE: chart.js
```javascript
const UP = "#089981";
const DOWN = "#f23645";
const BAR = 11.415;
const out = [];

function py(price) {
  return 1353.3 - (price - 5144) * 8.597;
}

function rect(x, y, w, h, fill, extra = "") {
  out.push(`<rect x="${x}" y="${y}" width="${w}" height="${h}" fill="${fill}" ${extra}/>`);
}

function line(x1, y1, x2, y2, stroke, extra = "") {
  out.push(`<line x1="${x1}" y1="${y1}" x2="${x2}" y2="${y2}" stroke="${stroke}" ${extra}/>`);
}

function label(x, y, text, extra = "") {
  out.push(`<text x="${x}" y="${y}" ${extra}>${text}</text>`);
}

function plus(x, y, color) {
  out.push(`<path d="M${x - 1.5} ${y}h3M${x} ${y - 1.5}v3" stroke="${color}"/>`);
}

// open, close, high, low (offsets from 5200; high and low default to the body)
function candle(x, bar, w) {
  const [o, c] = bar;
  const hi = bar[2] || Math.max(o, c);
  const lo = bar[3] || Math.min(o, c);
  const color = c >= o ? UP : DOWN;
  const top = Math.round(py(5200 + Math.max(o, c)) - 0.6);
  const bottom = Math.round(py(5200 + Math.min(o, c)) + 0.4);
  const wickTop = Math.round(py(5200 + hi) - 0.6);
  const wickBottom = Math.round(py(5200 + lo) + 0.2);
  const cx = Math.round(x - 0.5);
  if (hi !== Math.max(o, c) || lo !== Math.min(o, c)) {
    rect(cx, wickTop, 1, wickBottom - wickTop, color);
  }
  rect(cx - (w - 1) / 2, top, w, Math.max(1, bottom - top), color);
}

// 14:49:45 - 15:24:30
const friday = [
  [33,32,33,31],[32,32,33,31],[32,30],[30,32,33],[33,33],[33,33],[32,33],[34,35],[35,33],[33,34],
  [34,33],[33,32],[33,33],[33,33],[33,37],[37,37],[37,37],[38,38],[38,36],[35,35,35,34],
  [35,35],[35,33,36],[33,32],[33,34],[35,34],[34,35],[35,35],[36,35,37],[35,35],[35,34,36],
  [34,35],[34,34,34,33],[34,35],[35,34],[34,36,36,33],[36,37,41],[38,35,38,31],[35,37],[38,39],[39,40,41,37],
  [40,39,40,38],[39,39,40],[39,39],[40,41,41,39],[41,46,47],[46,46,47],[45,43,45,42],[43,43],[42,42,42,41],[43,45],
  [45,46],[45,45],[45,45],[44,45,45,43],[45,45],[45,45],[46,48],[48,48,49],[47,46],[45,44],
  [44,45],[44,42,44,41],[43,42,43,41],[41,41],[41,40],[40,41],[41,41],[42,40],[40,40,42],[39,40,41,38],
  [40,40,40,39],[39,39,40],[39,37,40],[37,36,37,35],[35,34],[33,35,35,32],[34,33,35],[34,35],[34,33],[33,35],
  [35,35],[35,35,36],[36,36,37],[36,39],[39,40],[40,40,41],[39,38],[40,40,41],[40,39],[39,38,39,37],
  [38,39],[38,39,39,37],[38,38,38,36],[38,38],[37,38,39,36],[38,38,38,37],[38,39,40],[40,39],[38,38],[39,41,46],
  [41,41,42],[42,44],[44,44],[45,48],[47,51],[51,52,54],[52,53],[53,54],[53,52],[53,52],
  [52,52],[53,53,54,52],[52,53],[53,54],[53,53,54,50],[54,54,54,53],[54,54,55,53],[54,54,55,53],[54,53],[54,57,58,53],
  [57,54,57,53],[54,54,55],[54,54],[55,54],[54,54,55],[54,54,54,53],[53,53],[53,53,54],[54,54,55,53],[53,55],
  [54,54,55],[53,54],[53,52],[52,53],[52,53,54],[53,49,54],[49,52],[52,48],[48,47,49,46]
];

// 09:00:15 - 09:10:45
const monday = [
  [30,45,60,22],[44,48,67,42],[47,40,63,38],[39,37,45,30],[31,38],[38,47,51],[47,65,67,45],[66,65,69],
  [66,59,74,46],[62,65,71],[65,65,67,56],[62,62,67,57],[63,64,65,54],[62,54,70,51],[53,50,59,48],
  [50,43,51,42],[42,30,43,28],[29,46,47,27],[46,44,49],[44,42,44,36],[42,42,44,35],[41,45,46],[44,44,47],
  [47,45,52],[45,48,51,39],[46,42,47,41],[43,36],[36,36,38,35],[38,34,38,32],[33,32,35,31],[31,28,31,25],
  [26,27,27,22],[26,20,29,16],[21,16,22,12],[15,12],[13,24,25,12],[25,27,28,24],[27,28,29,24],[29,28,31],
  [29,35,35,25],[36,46,48],[47,51,59],[50,48,51,44]
];

const mondayVwap = [
  622.5,615.4,608.2,605.4,606.4,601.4,595.4,591.4,581.4,575.4,571.4,567.1,563.6,549.3,545.4,544.3,544.3,
  544.3,544.3,544.3,544.3,543.2,543.2,542.1,541.4,541.4,541.4,541.4,541.4,541.4,542.5,543.2,545.4,546.4,
  547.5,549.3,550.4,550.4,551.4,552.5,550.7,549.3,548.2
];

function mondayX(i) {
  if (i < 13) return 1838.6 + i * BAR;
  if (i === 13) return 1991.6;
  return 2007.7 + (i - 14) * BAR;
}

// Grid
for (let p = 5144; p <= 5288; p += 4) {
  rect(58, Math.round(py(p) - 0.5), 2395, 1, "#0f0f0f");
}

// Volume
rect(1648, 1048, 121.5, 323, "#26323f");
rect(1770, 1353, 62, 18, "#10205c");
rect(58, 1370, 1590, 1, "#16285c");
[[1190, 12], [1250, 17], [1364, 8]].forEach(([x, w]) => rect(x, 1369, w, 2, "#1c3577"));
for (let i = 0; i < 43; i++) {
  const h = i === 13 ? 3 : 2 - (i % 3 === 1 ? 1 : 0);
  rect(mondayX(i) - 5, 1371 - h, 10, h, i % 3 ? "#10205c" : "#26323f");
}
out.push(`<path d="M58 1369.500H1648L1705 1344l5-1.500 230-1 12 26.500 8 1.500H2328" fill="none" stroke="#6b6926" stroke-dasharray="1 3"/>`);

// Candles
rect(58, Math.round(py(5233) - 0.6), 2, 1, UP);
friday.forEach((bar, i) => candle(66.7 + i * BAR, bar, 9));
rect(1801, Math.round(py(5270)), 1, Math.round(py(5187) - py(5270)), UP);
rect(1777, Math.round(py(5228) - 1), 49, Math.round(28 * 8.597) + 1, UP);
monday.forEach((bar, i) => candle(mondayX(i), bar, i === 13 ? 15 : 9));

// VWAP and previous session markers
for (let i = 0; i < 139; i++) {
  const x = Math.round(66.7 + i * BAR - 0.5) + 0.5;
  plus(x, Math.round(315.2 + i * 0.15) + 0.5, "#3f64ff");
  out.push(`<circle cx="${x}" cy="1275.500" r="2.300" fill="#0b8598"/>`);
}
plus(1709.5, 892.5, "#3f64ff");
out.push(`<circle cx="1709.500" cy="1275.500" r="2.500" fill="#2a8fa8"/>`);
plus(1801.5, 628.5, "#2962ff");
mondayVwap.forEach((y, i) => plus(Math.round(mondayX(i) - 0.5) + 0.5, Math.round(y - 0.5) + 0.5, "#2962ff"));

// Session backgrounds, painted over the candles
rect(58, 82, 1744, 1081, "#f23645", 'fill-opacity="0.15"');
rect(1802, 235, 651, 748, "#2f6cf3", 'fill-opacity="0.042"');
rect(1802, 458, 651, 413, "#2f70f3", 'fill-opacity="0.095"');

// Boxes
rect(1872.5, 611.5, 467, 16, "#ff9800", 'fill-opacity="0.2" stroke="#ec9a22"');
rect(2098.5, 420.5, 255, 2, "#3a2200", 'stroke="#ff9800"');

// Levels
line(1769, 484.5, 2332, 484.5, "#a39a5c", 'stroke-dasharray="5 6"');
line(1769.5, 82, 1769.5, 1371, "#6e5c20", 'stroke-dasharray="1 3"');
line(58, 1095, 1710, 1095, "#1fb5cc", 'stroke-width="2"');
line(1662, 1163.5, 1710, 1163.5, "#157a78");
line(1709, 1163, 1801, 1163, "#1fb5cc", 'stroke-width="2"');
line(58, 1163.5, 2453, 1163.5, "#fdc92f", 'stroke-width="3" stroke-dasharray="3 9"');
label(1709, 1093, "1530", 'text-anchor="middle" class="level"');
label(1801, 1162, "1530", 'text-anchor="middle" class="level"');
line(1826, 871, 2380, 871, "#b08a4a", 'stroke-width="2"');
monday.forEach((bar, i) => out.push(`<ellipse cx="${mondayX(i)}" cy="871.500" rx="2.600" ry="2.300" fill="#bdb8b0"/>`));
out.push(`<circle cx="1801.500" cy="872" r="1.800" fill="#9fb0aa"/>`);

// Crosshair
line(1334.5, 84, 1334.5, 1371, "#8f929e", 'stroke-dasharray="5 6"');
line(58, 826.5, 2430, 826.5, "#8f929e", 'stroke-dasharray="5 6"');

// Logo
out.push(`<g transform="translate(67 1338.500) scale(0.870)" fill="#e0e0e0"><path d="M14 22H7V11H0V4h14v18zM28 22h-8l7.500-18h8z"/><circle cx="20" cy="8" r="4"/></g>`);

// Price scale
for (let p = 5144; p <= 5292; p += 4) {
  if (p !== 5248) label(2461.5, py(p) + 3, "5," + (p - 5000));
}
rect(2386, 1362, 114, 18, "#ffeb3b", 'rx="2"');
label(2391, 1376, "Volume MA", 'class="dark"');
label(2461.5, 1376, "19.2K", 'class="dark"');
rect(2454, 450, 43, 17, "#ffeb3b", 'rx="1"');
label(2461.5, 463, "00:01", 'class="olive"');
rect(2415, 540, 82, 17, "#2962ff", 'rx="2"');
label(2419, 553, "VWAP", 'class="white"');
label(2461.5, 553, "5,238", 'class="white"');
rect(2432, 816, 65, 21, "#363a45", 'rx="2"');
out.push(`<circle cx="2442.500" cy="826.500" r="8" fill="none" stroke="#d2d2d2"/><path d="M2438.500 826.500h8M2442.500 822.500v8" stroke="#fff"/>`);
label(2461.5, 830.5, "5,205", 'class="white"');
rect(2380, 863, 117, 17, "#fff", 'rx="2"');
rect(2380, 863, 73, 8, "#dfe9fd");
label(2384, 875, "week :w_op", 'class="dark" textLength="65"');
label(2461.5, 875, "5,200", 'class="dark"');
rect(2454, 1155, 43, 17, "#fbc02d", 'rx="1"');
label(2461.5, 1167.5, "5,166", 'class="dark"');

// Time scale
rect(58, 1371, 2451, 26, "#000");
rect(58, 1371, 2451, 1, "#8f8c8d");
const times = [
  [78,"14:50"],[123,"14:51"],[169,"14:52"],[214.5,"14:53"],[260,"14:54"],[306,"14:55"],[351.5,"14:56"],
  [397,"14:57"],[443,"14:58"],[523,"15:00"],[568.5,"15:01"],[614,"15:02"],[694.5,"15:04"],[740,"15:05"],
  [786,"15:06"],[831.5,"15:07"],[877,"15:08"],[923,"15:09"],[968,"15:10"],[1014,"15:11"],[1060,"15:12"],
  [1105.5,"15:13"],[1151,"15:14"],[1197,"15:15"],[1243,"15:16"],[1425.5,"15:20"],[1471,"15:21"],
  [1517,"15:22"],[1562,"15:23"],[1608,"15:24"],[1801,"6月"],[1872,"09:01"],[1918,"09:02"],[1964,"09:03"],
  [2018,"09:04"],[2064,"09:05"],[2109.5,"09:06"],[2155,"09:07"],[2201,"09:08"],[2247,"09:09"],
  [2292.5,"09:10"],[2338.5,"09:11"],[2393,"09:12"],[2447,"09:13"]
];
times.forEach(([x, t]) => label(x, 1389, t, 'text-anchor="middle"'));
rect(1267, 1371, 134, 24, "#363a45", 'rx="2"');
label(1275, 1390, "5月 29 (金)", 'class="white"');
label(1345, 1390, "15:18:00", 'class="white"');
rect(2454, 1372, 55, 25, "#000");
rect(2453, 82, 1, 1315, "#8f8c8d");
out.push(`<path d="M2479 1379.500h7l3.500 6-3.500 6h-7l-3.500-6z" fill="none" stroke="#d2d2d2"/><circle cx="2482.500" cy="1385.500" r="2" fill="none" stroke="#d2d2d2"/>`);

document.getElementById("chart").innerHTML = out.join("");
```
